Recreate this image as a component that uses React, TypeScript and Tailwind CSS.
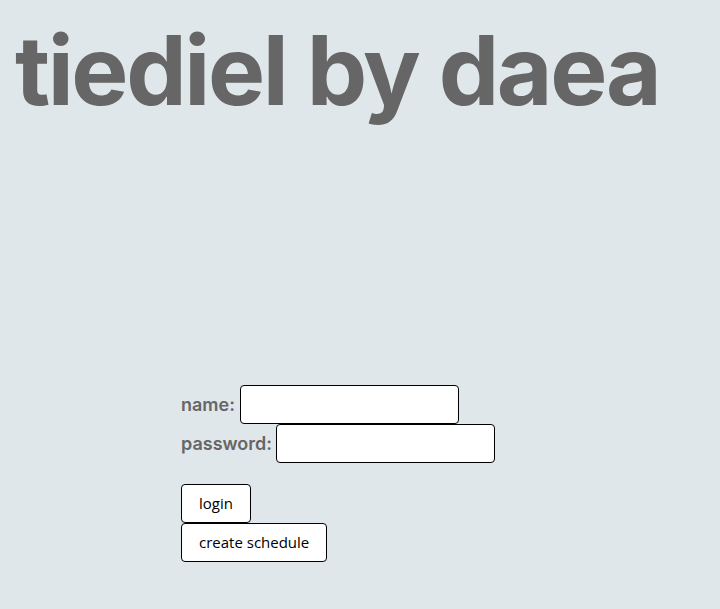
import React from 'react';

const App = () => {
    return (
        <div className="min-h-screen w-full bg-[#dfe7ea] font-['Inter',sans-serif]">
            <h1 className="pl-[15px] pt-[22px] text-[96px] font-bold leading-none tracking-tight text-[#666666]">
                tiediel by daea
            </h1>

            <form className="ml-[181px] mt-[267px] flex flex-col items-start">
                <label className="flex items-center gap-[5px] text-[18px] font-semibold text-[#666666]">
                    name:
                    <input
                        type="text"
                        className="h-[39px] w-[219px] rounded-[4px] border border-black bg-white px-2"
                    />
                </label>
                <label className="flex items-center gap-[4px] text-[18px] font-semibold text-[#666666]">
                    password:
                    <input
                        type="password"
                        className="h-[39px] w-[219px] rounded-[4px] border border-black bg-white px-2"
                    />
                </label>

                <div className="mt-[21px] flex flex-col items-start">
                    <button
                        type="button"
                        className="h-[39px] rounded-[4px] border border-black bg-white px-[17px] font-['Open_Sans',sans-serif] text-[15px] text-black"
                    >
                        login
                    </button>
                    <button
                        type="button"
                        className="h-[39px] rounded-[4px] border border-black bg-white px-[17px] font-['Open_Sans',sans-serif] text-[15px] text-black"
                    >
                        create schedule
                    </button>
                </div>
            </form>
        </div>
    );
};

export default App;
